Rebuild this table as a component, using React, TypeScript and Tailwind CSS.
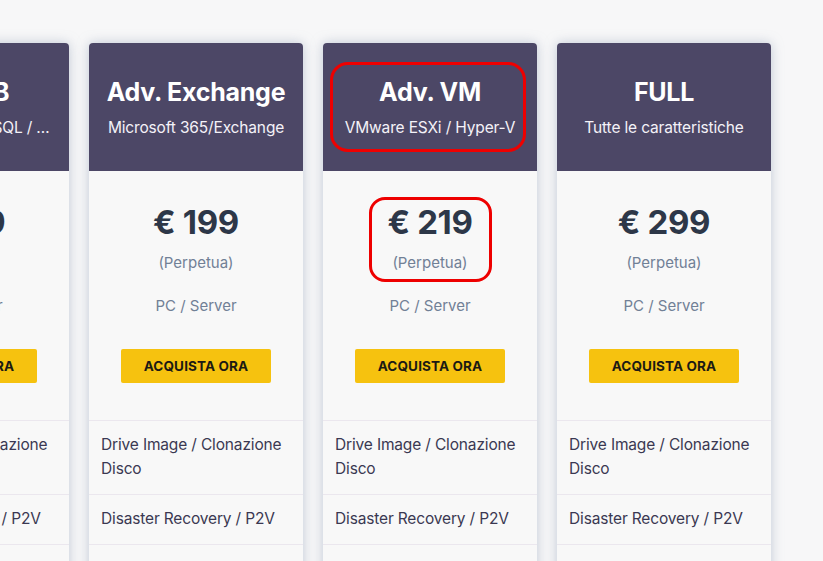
import React from "react";

type Plan = {
  title: string;
  subtitle: string;
  price: string;
  highlight?: boolean;
};

const plans: Plan[] = [
  { title: "Adv. DB", subtitle: "SQL Server / MySQL / …", price: "€ 149" },
  { title: "Adv. Exchange", subtitle: "Microsoft 365/Exchange", price: "€ 199" },
  { title: "Adv. VM", subtitle: "VMware ESXi / Hyper-V", price: "€ 219", highlight: true },
  { title: "FULL", subtitle: "Tutte le caratteristiche", price: "€ 299" },
];

const features = [
  "Drive Image / Clonazione Disco",
  "Disaster Recovery / P2V",
  "Backup su cloud / storage remoto",
];

function PlanCard({ plan }: { plan: Plan }) {
  return (
    <div className="relative flex w-[214px] shrink-0 flex-col rounded-t-[4px] bg-[#f8f8f8] shadow-[0_0_12px_rgba(148,163,184,0.55)]">
      <div className="flex h-[128px] flex-col items-center rounded-t-[4px] bg-[#4c4766] px-4 pt-[33px] text-white">
        <h2 className="text-[25px] font-bold leading-[32px] tracking-[-0.01em]">{plan.title}</h2>
        <p className="mt-[9px] whitespace-nowrap text-center text-[15.5px] leading-[22px] tracking-[-0.01em] text-[#f4f2f8]">
          {plan.subtitle}
        </p>
      </div>

      <div className="flex flex-col items-center pt-[31px]">
        <div className="text-[33px] font-bold leading-[40px] tracking-[-0.01em] text-[#2d3748]">{plan.price}</div>
        <div className="mt-[10px] text-[15px] leading-[22px] text-[#718096]">(Perpetua)</div>
        <div className="mt-[21px] text-[15px] leading-[22px] text-[#718096]">PC / Server</div>
        <button
          type="button"
          className="mt-[32px] h-[34px] w-[150px] rounded-[2px] bg-[#f6c20f] text-[13.5px] font-bold tracking-[0.01em] text-[#1c1a14]"
        >
          ACQUISTA ORA
        </button>
      </div>

      <ul className="mt-[37px] flex flex-col">
        {features.map((f) => (
          <li
            key={f}
            className="border-t border-[#ebe7ee] px-3 pt-3 pb-[13px] text-[15.5px] leading-6 tracking-[-0.01em] text-[#3b3852]"
          >
            {f}
          </li>
        ))}
      </ul>

      {plan.highlight && (
        <>
          <div className="pointer-events-none absolute left-[7px] top-[19px] h-[90px] w-[196px] rounded-[18px] border-[3px] border-[#ee0000]" />
          <div className="pointer-events-none absolute left-[46px] top-[154px] h-[85px] w-[123px] rounded-[16px] border-[3px] border-[#ee0000]" />
        </>
      )}
    </div>
  );
}

export default function App() {
  return (
    <div
      className="h-[561px] w-[823px] overflow-hidden bg-[#f7f7f8]"
      style={{ fontFamily: "Inter, 'Noto Sans', sans-serif" }}
    >
      <div className="ml-[-145px] flex gap-5 pt-[43px]">
        {plans.map((p) => (
          <PlanCard key={p.title} plan={p} />
        ))}
      </div>
    </div>
  );
}
